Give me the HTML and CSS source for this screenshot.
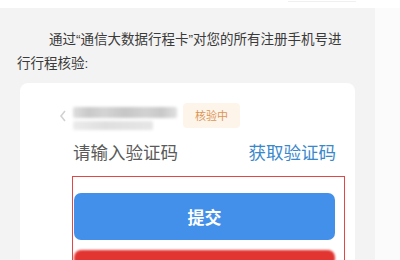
FILE: index.html
```html
<!DOCTYPE html>
<html lang="zh-CN">
<head>
    <meta charset="UTF-8">
    <title>行程核验</title>
    <link rel="stylesheet" href="styles.css">
</head>
<body>
    <div class="topbar"><span class="tab"></span></div>

    <div class="screen">
        <p class="intro">通过“通信大数据行程卡”对您的所有注册手机号进行行程核验:</p>

        <div class="card">
            <div class="phone-row">
                <svg class="back" width="8" height="12" viewBox="0 0 8 12">
                    <path d="M6 1 L2 6 L6 11" fill="none" stroke="#d2d2d2" stroke-width="1.6"/>
                </svg>
                <div class="phone">
                    <span class="blur line1"></span>
                    <span class="blur line2"></span>
                </div>
                <span class="badge">核验中</span>
            </div>

            <div class="code-row">
                <span class="code-input">请输入验证码</span>
                <a class="get-code">获取验证码</a>
            </div>

            <div class="frame">
                <button class="submit">提交</button>
                <div class="red-bar"></div>
            </div>
        </div>
    </div>
</body>
</html>
```

FILE: styles.css
```css
body {
    margin: 0;
    width: 400px;
    height: 260px;
    overflow: hidden;
    background: #fbfbfb;
    font-family: "Noto Sans CJK SC", "Noto Sans", sans-serif;
}

.topbar {
    position: relative;
    height: 8px;
    background: #fff;
}

.topbar .tab {
    position: absolute;
    left: 288px;
    top: 0;
    width: 68px;
    height: 1px;
    border-bottom: 1px solid #f0f0f0;
}

.screen {
    width: 375px;
    height: 252px;
    overflow: hidden;
    box-sizing: border-box;
    padding: 20px 20px 0 17px;
    background: #f3f3f3;
}

.intro {
    margin: 0;
    padding-right: 8px;
    font-family: "Liberation Sans", "Noto Sans CJK SC", sans-serif;
    font-size: 13.5px;
    line-height: 24px;
    text-indent: 32px;
    color: #3a3a3a;
}

.card {
    margin: 7px 0 0 3px;
    height: 200px;
    padding: 17px 10px 0 33px;
    background: #fff;
    border-radius: 8px;
}

.phone-row {
    display: flex;
    align-items: center;
    height: 30px;
}

.back {
    width: 20px;
    margin-top: 2px;
}

.phone {
    width: 104px;
    display: flex;
    flex-direction: column;
    gap: 3px;
    margin-top: 6px;
}

.blur {
    display: block;
    height: 11px;
    border-radius: 2px;
    filter: blur(1.5px);
    background: linear-gradient(90deg, #dedede 0%, #c9c9c9 15%, #d4d4d4 30%, #c6c6c6 50%, #d2d2d2 70%, #c8c8c8 85%, #e0e0e0 100%);
}

.blur.line2 {
    width: 80px;
    height: 9px;
    background: linear-gradient(90deg, #ebebeb, #dfdfdf 40%, #e6e6e6);
}

.badge {
    margin-left: 6px;
    padding: 4px 12px;
    font-size: 11px;
    line-height: 17px;
    color: #de9456;
    background: #fdf5ea;
    border-radius: 4px;
}

.code-row {
    display: flex;
    justify-content: space-between;
    margin-top: 10px;
    padding: 0 9px 0 20px;
    font-size: 17.5px;
    line-height: 24px;
}

.code-input {
    color: #5a5a5a;
}

.get-code {
    color: #3a88cc;
}

.frame {
    margin: 12px 0 0 19px;
    height: 120px;
    padding: 16px 9px 0 1px;
    border: 1px solid #e04848;
    border-bottom: none;
}

.submit {
    display: block;
    width: 100%;
    height: 47px;
    border: none;
    border-radius: 7px;
    background: #4290e9;
    color: #fff;
    font-family: inherit;
    font-size: 17px;
    font-weight: bold;
}

.red-bar {
    margin-top: 10px;
    height: 16px;
    border-radius: 7px;
    background: #e23431;
    filter: blur(1px);
}
```
